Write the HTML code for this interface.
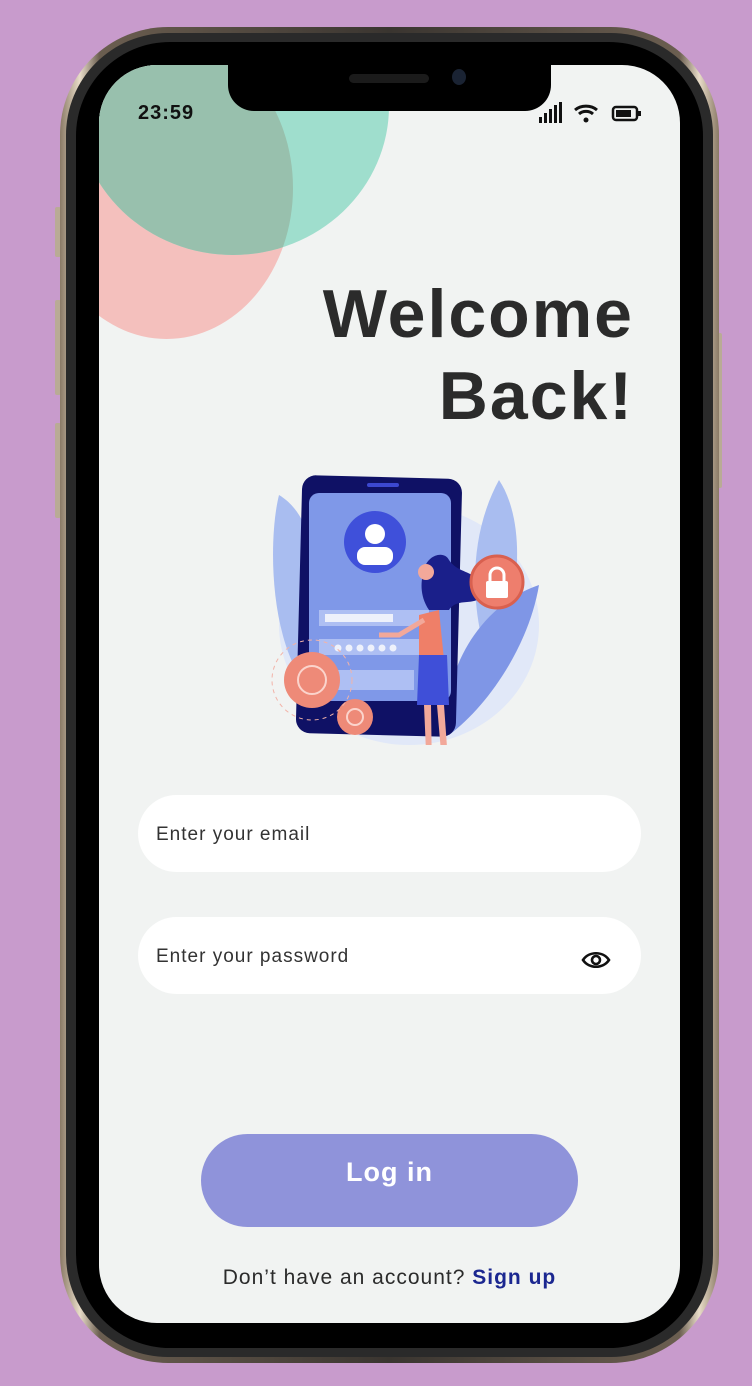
<!DOCTYPE html>
<html><head><meta charset="utf-8"><style>
*{margin:0;padding:0;box-sizing:border-box}
body{width:752px;height:1386px;background:#c89bcc;position:relative;overflow:hidden;font-family:"Liberation Sans",sans-serif}
.frame{position:absolute;left:60px;top:27px;width:659px;height:1336px;border-radius:108px;background:linear-gradient(90deg,#8a7a66,#e8dcc8 3%,#6b5e50 6%,#3a3530 50%,#6b5e50 94%,#e8dcc8 97%,#8a7a66);}
.bezel{position:absolute;left:66px;top:33px;width:647px;height:1324px;border-radius:102px;background:#2a2a2a;}
.black{position:absolute;left:76px;top:42px;width:627px;height:1306px;border-radius:94px;background:#000;}
.screen{position:absolute;left:99px;top:65px;width:581px;height:1258px;border-radius:58px;background:#f1f3f2;overflow:hidden}
.btn{position:absolute;width:6px;background:#b9ab95;border-radius:2px}
</style></head><body>
<div class="btn" style="left:55px;top:207px;height:50px"></div>
<div class="btn" style="left:55px;top:300px;height:95px"></div>
<div class="btn" style="left:55px;top:423px;height:95px"></div>
<div class="btn" style="left:716px;top:333px;height:155px"></div>
<div class="frame"></div><div class="bezel"></div><div class="black"></div>
<div class="screen">
 <div style="position:absolute;left:-59px;top:-28px;width:253px;height:302px;border-radius:50%;background:#f4c0bd"></div>
 <div style="position:absolute;left:-22px;top:-108px;width:312px;height:298px;border-radius:50%;background:#9fdecd"></div>
 <div style="position:absolute;left:-59px;top:-28px;width:253px;height:302px;border-radius:50%;overflow:hidden"><div style="position:absolute;left:37px;top:-80px;width:312px;height:298px;border-radius:50%;background:#98c0ad"></div></div>
 <div style="position:absolute;left:129px;top:0;width:323px;height:46px;background:#000;border-radius:0 0 26px 26px"></div>
 <div style="position:absolute;left:250px;top:9px;width:80px;height:9px;border-radius:5px;background:#1b1b1b"></div>
 <div style="position:absolute;left:353px;top:4px;width:14px;height:16px;border-radius:50%;background:#1a2333"></div>
 <div style="position:absolute;left:39px;top:37px;font-weight:bold;font-size:20px;color:#111;letter-spacing:1px">23:59</div>
 <svg style="position:absolute;left:438px;top:36px" width="106" height="24" viewBox="0 0 106 24">
  <rect x="2" y="16" width="3" height="6" fill="#111"/><rect x="7" y="12" width="3" height="10" fill="#111"/><rect x="12" y="8" width="3" height="14" fill="#111"/><rect x="17" y="4" width="3" height="18" fill="#111"/><rect x="22" y="1" width="3" height="21" fill="#111"/>
  <path d="M38 9a16 14 0 0 1 22 0M42 13a10 9 0 0 1 14 0" stroke="#111" stroke-width="3" fill="none"/><circle cx="49" cy="19" r="2.5" fill="#111"/>
  <rect x="76" y="6" width="24" height="13" rx="3" stroke="#111" stroke-width="2.5" fill="none"/><rect x="79" y="9" width="15" height="7" fill="#111"/><rect x="101" y="10" width="3" height="5" fill="#111"/>
 </svg>
 <div style="position:absolute;right:46px;top:208px;text-align:right;font-size:68px;font-weight:bold;color:#2b2b2b;line-height:82px;letter-spacing:2px">Welcome<br>Back!</div>
 <svg style="position:absolute;left:170px;top:410px" width="275" height="270" viewBox="0 0 275 270">
  <ellipse cx="140" cy="150" rx="130" ry="120" fill="#e1e8f8"/>
  <path d="M10 20 C60 50 50 150 30 200 C0 150 0 60 10 20Z" fill="#a9bdf0"/>
  <path d="M230 5 C260 50 250 140 220 190 C200 130 200 60 230 5Z" fill="#a9bdf0"/>
  <path d="M270 110 C260 170 220 230 180 260 C170 200 210 130 270 110Z" fill="#7f96e6"/>
  <rect x="30" y="2" width="160" height="258" rx="14" fill="#0f1165" transform="rotate(1.5 110 130)"/>
  <rect x="40" y="18" width="142" height="208" rx="10" fill="#7f98e8"/>
  <rect x="98" y="8" width="32" height="4" rx="2" fill="#3c48d0"/>
  <circle cx="106" cy="67" r="31" fill="#3f50da"/>
  <circle cx="106" cy="59" r="10" fill="#fff"/><rect x="88" y="72" width="36" height="18" rx="8" fill="#fff"/>
  <rect x="50" y="135" width="110" height="16" fill="#aebff3"/><rect x="56" y="139" width="68" height="8" fill="#eef1fb"/>
  <rect x="50" y="164" width="110" height="16" fill="#aebff3"/>
  <g fill="#eef1fb"><circle cx="69" cy="173" r="3.5"/><circle cx="80" cy="173" r="3.5"/><circle cx="91" cy="173" r="3.5"/><circle cx="102" cy="173" r="3.5"/><circle cx="113" cy="173" r="3.5"/><circle cx="124" cy="173" r="3.5"/></g>
  <rect x="50" y="195" width="95" height="20" fill="#aebff3"/>
  <circle cx="43" cy="205" r="28" fill="#ee8a78"/><circle cx="43" cy="205" r="14" fill="none" stroke="#fbd4cc" stroke-width="2"/>
  <circle cx="86" cy="242" r="18" fill="#ee8a78"/><circle cx="86" cy="242" r="8" fill="none" stroke="#fbd4cc" stroke-width="2"/>
  <circle cx="43" cy="205" r="40" fill="none" stroke="#f2b3a8" stroke-dasharray="4 4"/>
  <path d="M160 135 C150 120 152 105 155 95 C158 80 175 75 180 85 C190 100 210 95 215 115 C210 135 190 120 180 135Z" fill="#1a1f8a"/>
  <path d="M150 140 L170 135 L175 185 L150 185Z" fill="#ef7f68"/>
  <path d="M150 180 L178 180 L180 230 L148 230Z" fill="#3f4fd8"/>
  <path d="M155 230 L162 230 L163 300 L158 300Z M168 230 L175 230 L180 300 L174 300Z" fill="#f2a89a"/>
  <path d="M155 145 L130 160 L110 160" stroke="#f2a89a" stroke-width="5" fill="none"/>
  <circle cx="157" cy="97" r="8" fill="#f2a89a"/>
  <circle cx="228" cy="107" r="26" fill="#ee7e6d" stroke="#d9604f" stroke-width="3"/>
  <rect x="217" y="106" width="22" height="17" rx="2" fill="#fff"/><path d="M221 106v-6a7 7 0 0 1 14 0v6" stroke="#fff" stroke-width="3" fill="none"/>
 </svg>
 <div style="position:absolute;left:39px;top:730px;width:503px;height:77px;border-radius:39px;background:#fff"></div>
 <div style="position:absolute;left:57px;top:759px;font-size:19px;color:#333;letter-spacing:1px">Enter your email</div>
 <div style="position:absolute;left:39px;top:852px;width:503px;height:77px;border-radius:39px;background:#fff"></div>
 <div style="position:absolute;left:57px;top:881px;font-size:19px;color:#333;letter-spacing:1px">Enter your password</div>
 <svg style="position:absolute;left:482px;top:883px" width="30" height="24" viewBox="0 0 30 24"><path d="M2 12C8 3 22 3 28 12C22 21 8 21 2 12Z" stroke="#111" stroke-width="2.6" fill="none"/><circle cx="15" cy="12" r="4" stroke="#111" stroke-width="2.6" fill="none"/></svg>
 <div style="position:absolute;left:102px;top:1069px;width:377px;height:93px;border-radius:47px;background:#8f93da;color:#fff;font-weight:bold;font-size:27px;text-align:center;line-height:76px;letter-spacing:1px">Log in</div>
 <div style="position:absolute;left:0;width:581px;top:1201px;text-align:center;font-size:21px;color:#2b2b2b;letter-spacing:1px">Don’t have an account? <b style="color:#1b2790">Sign up</b></div>
</div>
</body></html>
